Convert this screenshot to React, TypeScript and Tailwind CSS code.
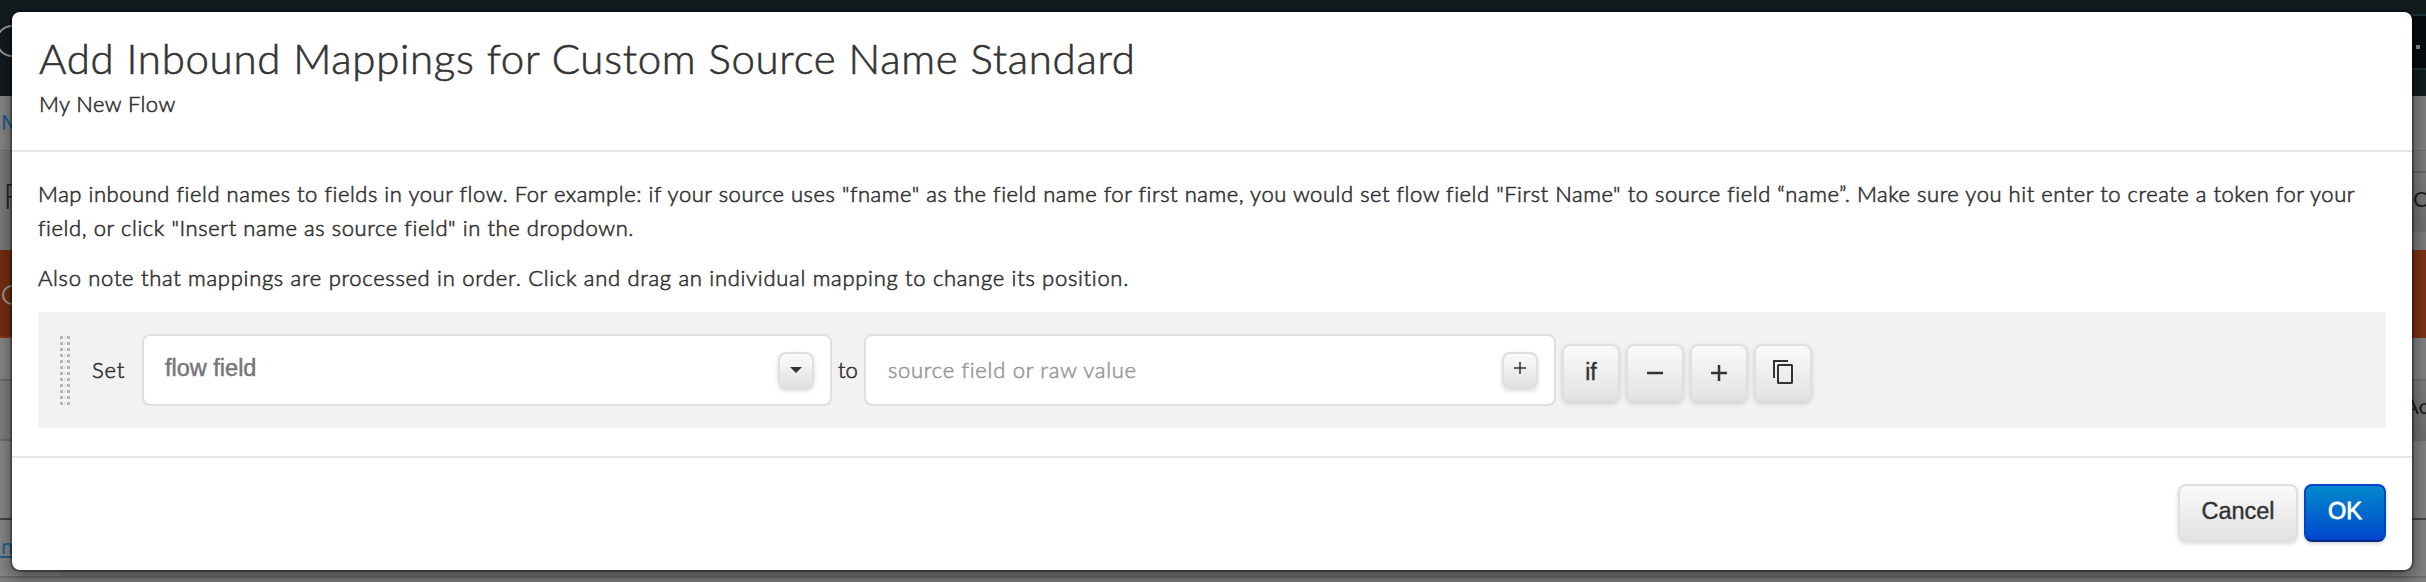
import type { ReactNode } from "react";

function PageLeft() {
  return (
    <div className="flex w-[60px] flex-col overflow-hidden font-['Lato','Liberation_Sans',sans-serif]">
      <div className="h-24 shrink-0 bg-[#121b1e] pt-[25px]">
        <div className="-ml-1 size-8 rounded-full border-2 border-[#9a9a9a]" />
      </div>
      <div className="h-[55px] shrink-0 border-b border-[#707070] bg-[#858585] pt-[9px] pl-px text-[22px] font-medium text-[#1f5f90]">
        My
      </div>
      <div className="h-[99px] shrink-0 bg-[#7a7a7a] pt-[24px] pl-[3px] text-4xl font-light text-[#1d232b]">F</div>
      <div className="h-[88px] shrink-0 border-b-2 border-[#873810] bg-[#732d13] pt-[35px]">
        <div className="ml-0.5 size-5 rounded-full border-2 border-[#9a9a9a]" />
      </div>
      <div className="h-[43px] shrink-0 border-b-2 border-[#6d6d6d] bg-[#858585]" />
      <div className="h-[60px] shrink-0 border-b-2 border-[#6d6d6d] bg-[#7f7f7f]" />
      <div className="h-[79px] shrink-0 border-b-2 border-[#444] bg-[#858585]" />
      <div className="h-[58px] shrink-0 border-b-2 border-[#6d6d6d] bg-[#858585] pt-[9px]">
        <div className="h-[29px] w-10 border-b-2 border-[#1f5f90] pl-px text-[22px] leading-[34px] text-[#1f5f90]">na</div>
      </div>
      <div className="grow bg-[#7d7d7d]" />
    </div>
  );
}

function PageRight() {
  return (
    <div className="flex w-[36px] flex-col font-['Lato','Liberation_Sans',sans-serif] text-[24px] leading-[36px] text-[#1e1e1e]">
      <div className="h-24 shrink-0 bg-[#121b1e] pt-3.5">
        <div className="flex h-14 items-center border-y-2 border-[#1b3338] bg-[#070c0e] pt-2.5 pl-[26px]">
          <div className="size-1 bg-[#8b8b8b]" />
        </div>
      </div>
      <div className="h-[55px] shrink-0 border-b border-[#707070] bg-[#7d7d7d]" />
      <div className="h-[22px] shrink-0 border-b-2 border-[#666] bg-[#7a7a7a]" />
      <div className="h-[59px] shrink-0 bg-linear-to-b from-[#7a7a7a] to-[#6d6d6d] pt-2 pl-[23px] text-[22px]">C</div>
      <div className="h-[18px] shrink-0 bg-[#7a7a7a]" />
      <div className="h-[88px] shrink-0 bg-[#7b3117]" />
      <div className="h-[43px] shrink-0 border-b-2 border-[#6d6d6d] bg-[#808080]" />
      <div className="h-[60px] shrink-0 border-b-2 border-[#6d6d6d] bg-linear-to-b from-[#7a7a7a] to-[#6d6d6d] pt-[7px] pl-3.5 text-[22px]">
        Ac
      </div>
      <div className="h-[79px] shrink-0 border-b-2 border-[#444] bg-[#7f7f7f]" />
      <div className="h-[58px] shrink-0 border-b-2 border-[#6d6d6d] bg-[#808080]" />
      <div className="grow bg-[#7d7d7d]" />
    </div>
  );
}

function GreyButton({ className, children }: { className: string; children: ReactNode }) {
  return (
    <button
      className={
        "flex shrink-0 items-center justify-center rounded-lg border-2 border-[#dfdfdf] bg-linear-to-b from-[#fafafa] to-[#e2e2e2] text-[#333] shadow-[0_2px_4px_rgba(0,0,0,0.15)] " +
        className
      }
    >
      {children}
    </button>
  );
}

function DragHandle() {
  return (
    <div className="ml-[22px] flex w-2.5 flex-col gap-[3px]">
      {Array.from({ length: 12 }, (_, i) => (
        <div key={i} className="flex h-[3px] justify-between">
          <div className="w-[3px] bg-[#b5b5b5]" />
          <div className="w-[2px] bg-[#e6e6e6]" />
          <div className="w-[3px] bg-[#b5b5b5]" />
        </div>
      ))}
    </div>
  );
}

function MappingRow() {
  return (
    <div className="mt-[17px] flex h-[116px] items-center bg-[#f2f2f2] text-[22px]">
      <DragHandle />
      <span className="ml-[22px] w-[50px] whitespace-nowrap pb-px tracking-[0.8px]">Set</span>
      <div className="flex h-[72px] w-[690px] shrink-0 items-center justify-between rounded-lg border-2 border-[#dfdfdf] bg-white pr-4 pl-[21px]">
        <span className="pb-1 font-['Liberation_Sans',sans-serif] text-[23.5px] text-[#777] [-webkit-text-stroke:0.5px_#777]">
          flow field
        </span>
        <GreyButton className="h-[37px] w-9">
          <svg width="12" height="6" viewBox="0 0 12 6">
            <path d="M0 0h12L6 6z" fill="#333" />
          </svg>
        </GreyButton>
      </div>
      <span className="w-8 shrink-0 pb-px text-center">to</span>
      <div className="flex h-[72px] w-[692px] shrink-0 items-center justify-between rounded-lg border-2 border-[#dfdfdf] bg-white pr-4 pl-[22px]">
        <span className="pb-px tracking-[0.72px] text-[#999] [-webkit-text-stroke:0.6px_#999]">
          source field or raw value
        </span>
        <GreyButton className="h-[37px] w-9">
          <svg width="12" height="12" viewBox="0 0 12 12" className="mb-1">
            <path d="M0 6h12M6 0v12" stroke="#333" strokeWidth="1.5" />
          </svg>
        </GreyButton>
      </div>
      <div className="mt-1.5 ml-1.5 flex gap-1.5">
        <GreyButton className="h-[58px] w-[58px] pb-0.5 font-['Liberation_Sans',sans-serif] text-[23px] [-webkit-text-stroke:0.4px_#333]">
          if
        </GreyButton>
        <GreyButton className="h-[58px] w-[58px]">
          <svg width="16" height="16" viewBox="0 0 16 16" className="mb-px">
            <path d="M0 8h16" stroke="#333" strokeWidth="2.5" />
          </svg>
        </GreyButton>
        <GreyButton className="h-[58px] w-[58px]">
          <svg width="16" height="16" viewBox="0 0 16 16" className="mb-px">
            <path d="M0 8h16M8 0v16" stroke="#333" strokeWidth="2.5" />
          </svg>
        </GreyButton>
        <GreyButton className="h-[58px] w-[58px]">
          <svg width="22" height="24" viewBox="0 0 22 24" fill="none" stroke="#333" strokeWidth="2" className="mb-0.5">
            <path d="M16 1H2V18" />
            <rect x="6" y="5" width="14" height="18" rx="0.5" />
          </svg>
        </GreyButton>
      </div>
    </div>
  );
}

export default function App() {
  return (
    <div className="relative flex h-[582px] w-[2426px] overflow-hidden bg-[#7d7d7d]">
      <div className="flex h-full w-full justify-between bg-[#7d7d7d]">
        <PageLeft />
        <div className="flex grow flex-col">
          <div className="h-24 bg-[#121b1e]" />
          <div className="h-[480px]" />
          <div className="h-0.5 bg-[#6d6d6d]" />
        </div>
        <PageRight />
      </div>
      <div
        role="dialog"
        className="absolute top-3 left-3 flex h-[558px] w-[2400px] flex-col rounded-lg bg-white font-['Lato','Liberation_Sans',sans-serif] font-light text-[#333] shadow-[0_0_0_2px_rgba(0,0,0,0.3),0_6px_18px_rgba(0,0,0,0.5)] [-webkit-text-stroke:0.6px_#333]"
      >
        <header className="h-[140px] shrink-0 border-b-2 border-[#e5e5e5] pt-[21px] pl-[27px]">
          <h1 className="text-[42px] leading-[50px] tracking-[0.7px] whitespace-nowrap">
            Add Inbound Mappings for Custom Source Name Standard
          </h1>
          <p className="mt-1 text-[22px] leading-[34px] tracking-[0.4px]">My New Flow</p>
        </header>
        <main className="h-[306px] shrink-0 border-b-2 border-[#e5e5e5] px-[26px] pt-[25px] text-[22px] leading-[34px]">
          <p className="whitespace-nowrap">
            <span className="tracking-[0.54px]">
              Map inbound field names to fields in your flow. For example: if your source uses "fname" as the field name
              for first name, you would set flow field "First Name" to source field “name”. Make sure you hit enter to
              create a token for your
            </span>
            <br />
            <span className="tracking-[0.58px]">field, or click "Insert name as source field" in the dropdown.</span>
          </p>
          <p className="mt-4 tracking-[0.7px] whitespace-nowrap">
            Also note that mappings are processed in order. Click and drag an individual mapping to change its position.
          </p>
          <MappingRow />
        </main>
        <footer className="flex justify-end gap-1.5 pt-[26px] pr-[26px] font-['Liberation_Sans',sans-serif] text-[23.5px]">
          <GreyButton className="h-[58px] w-[120px] pb-0.5 [-webkit-text-stroke:0.4px_#333]">Cancel</GreyButton>
          <button className="h-[58px] w-[82px] rounded-lg border-2 border-[#0044cc] border-b-[#002a80] bg-linear-to-b from-[#0088cc] to-[#0044cc] pb-0.5 text-white shadow-[0_2px_4px_rgba(0,0,0,0.15)] [-webkit-text-stroke:0.8px_#fff]">
            OK
          </button>
        </footer>
      </div>
    </div>
  );
}
